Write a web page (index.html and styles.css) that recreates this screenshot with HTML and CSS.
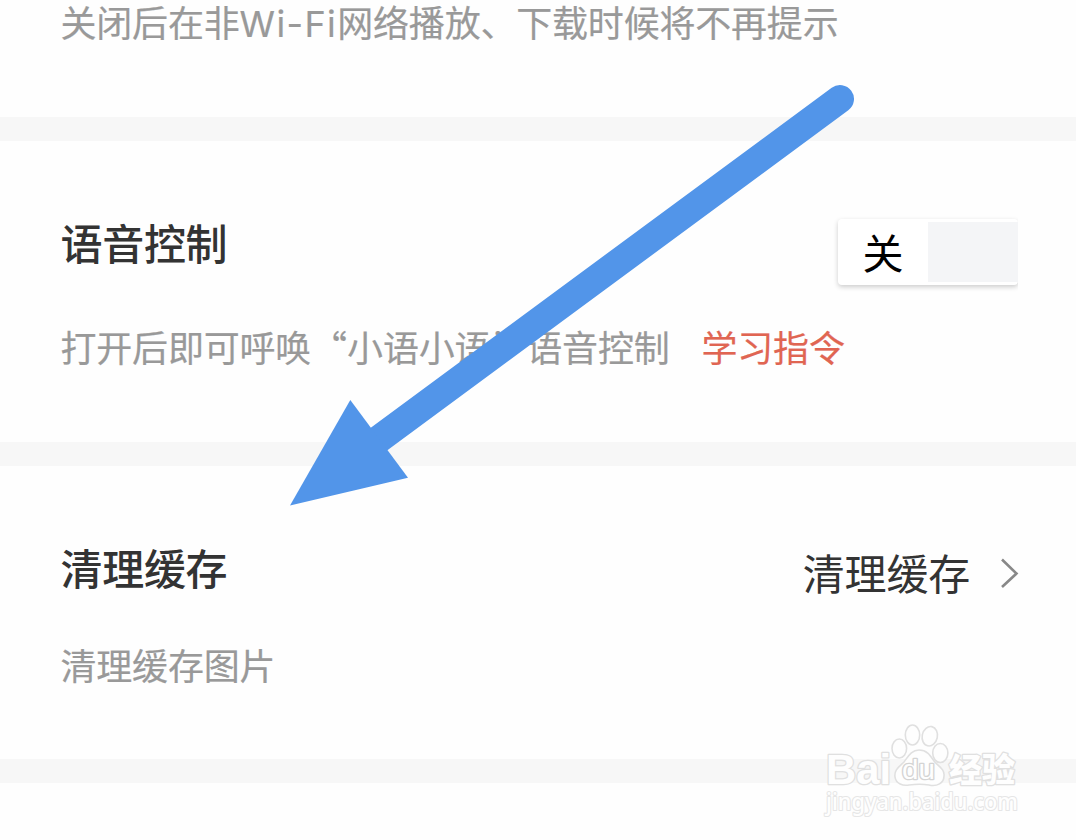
FILE: index.html
```html
<!DOCTYPE html>
<html lang="zh-CN">
<head>
    <meta charset="UTF-8">
    <title>设置</title>
    <link rel="stylesheet" href="styles.css">
</head>
<body>
    <div class="page">
        <section class="item network">
            <p class="desc">关闭后在非<span class="latin">Wi-Fi</span>网络播放、下载时候将不再提示</p>
        </section>

        <section class="item voice">
            <div class="row">
                <h2>语音控制</h2>
                <div class="switch">
                    <span class="knob">关</span>
                    <span class="track"></span>
                </div>
            </div>
            <p class="desc">打开后即可呼唤<span class="quote open">“</span>小语小语<span class="quote close">”</span>语音控制<a class="link">学习指令</a></p>
        </section>

        <section class="item cache">
            <div class="row">
                <h2>清理缓存</h2>
                <div class="action">
                    <span>清理缓存</span>
                    <svg class="chevron" width="20" height="32" viewBox="0 0 20 32">
                        <path d="M3 2.500L17.500 16.500L3 30" fill="none" stroke="#888" stroke-width="2.6"/>
                    </svg>
                </div>
            </div>
            <p class="desc">清理缓存图片</p>
        </section>

        <section class="item last"></section>

        <svg class="arrow" width="1076" height="840" viewBox="0 0 1076 840">
            <path d="M375 442L840 99" stroke="#5295e9" stroke-width="28" stroke-linecap="round"/>
            <path d="M290 505.5L350.3 400L408 477.8Z" fill="#5295e9"/>
        </svg>

        <svg class="watermark" width="220" height="120" viewBox="0 0 220 120">
            <g class="mark">
                <text x="16" y="74" font-size="43" textLength="65" lengthAdjust="spacingAndGlyphs" class="bold">Bai</text>
                <ellipse cx="89.300" cy="38.500" rx="7.300" ry="9.500"/>
                <ellipse cx="102.500" cy="25" rx="7.200" ry="10"/>
                <ellipse cx="119.800" cy="26.200" rx="7.600" ry="9.800" transform="rotate(12 119.800 26.200)"/>
                <ellipse cx="130.300" cy="43" rx="7.600" ry="9.500"/>
                <path d="M109 40C101 40 98 47 94 52C89 57 84 60 85 67C86 74 93 76 99 75C106 74 113 74 119 75C127 77 134 73 134 66C135 59 128 56 124 51C120 45 117 40 109 40Z"/>
                <text x="92" y="69" font-size="27" textLength="33" lengthAdjust="spacingAndGlyphs" class="du">du</text>
                <text x="139" y="72" font-size="33" textLength="66" lengthAdjust="spacingAndGlyphs" class="cn">经验</text>
                <text x="16" y="100" font-size="23" textLength="192" lengthAdjust="spacingAndGlyphs" class="site">jingyan.baidu.com</text>
            </g>
        </svg>
    </div>
</body>
</html>
```
FILE: styles.css
```css
* {
    box-sizing: border-box;
}

body {
    margin: 0;
    background: #fefefe;
    font-family: "Noto Sans CJK SC", sans-serif;
    color: #333;
}

.page {
    position: relative;
    width: 1076px;
    height: 840px;
    overflow: hidden;
}

.item {
    padding: 0 58px 0 60.5px;
    border-bottom: 24px solid #f7f7f7;
}

.network {
    height: 141px;
}

.voice {
    height: 325px;
    padding-top: 76px;
}

.cache {
    height: 317px;
    padding-top: 76px;
}

.last {
    border: none;
}

.row {
    display: flex;
    justify-content: space-between;
    height: 80px;
}

h2 {
    margin: 0;
    font-size: 42px;
    font-weight: 500;
    line-height: 50px;
    letter-spacing: -0.3px;
}

.desc {
    margin: 0;
    font-size: 36px;
    line-height: 44px;
    letter-spacing: -0.2px;
    color: #999;
    white-space: nowrap;
    -webkit-text-stroke: 0.2px;
}

.network .desc {
    line-height: 42px;
}

.voice .desc {
    margin-top: 27px;
}

.cache .desc {
    margin-top: 20px;
}

.latin {
    font-family: Inter, sans-serif;
    letter-spacing: 1.4px;
}

.quote {
    display: inline-block;
    width: 36px;
}

.open {
    padding-right: 5px;
    text-align: right;
}

.close {
    padding-left: 4px;
}

.link {
    margin-left: 32px;
    color: #e06552;
}

.switch {
    display: flex;
    width: 180px;
    height: 66px;
    margin-top: 2px;
    padding: 3px 0;
    border-radius: 4px;
    background: #fff;
    box-shadow: 0 2px 5px rgba(0, 0, 0, 0.2);
    clip-path: inset(-4px 0 -8px -6px);
}

.knob {
    width: 90px;
    font-size: 41px;
    line-height: 59px;
    text-align: center;
    color: #000;
}

.track {
    width: 90px;
    background: #f4f5f7;
}

.action {
    display: flex;
    align-items: center;
    gap: 29px;
    height: 60px;
    margin-right: -1px;
    font-size: 42px;
    letter-spacing: -0.2px;
}

.action span {
    margin-top: -1px;
}

.chevron {
    margin-top: 2px;
}

.arrow,
.watermark {
    position: absolute;
    left: 0;
    top: 0;
}

.watermark {
    left: 810px;
    top: 710px;
}

.mark {
    fill: #fefefe;
    stroke: #e0e0e0;
    stroke-width: 1.6;
    stroke-linejoin: round;
}

.mark text {
    paint-order: stroke;
    stroke-width: 2.6;
}

.mark .bold,
.mark .du {
    font-family: "Liberation Sans", sans-serif;
    font-weight: bold;
}

.mark .du {
    font-weight: normal;
    stroke: #d4d4d4;
}

.mark .cn {
    font-family: "Noto Sans CJK SC", sans-serif;
    font-weight: 900;
}

.mark .site {
    font-family: "Noto Sans", sans-serif;
    font-weight: 500;
    stroke: #e6e6e6;
    stroke-width: 2.2;
}
```
